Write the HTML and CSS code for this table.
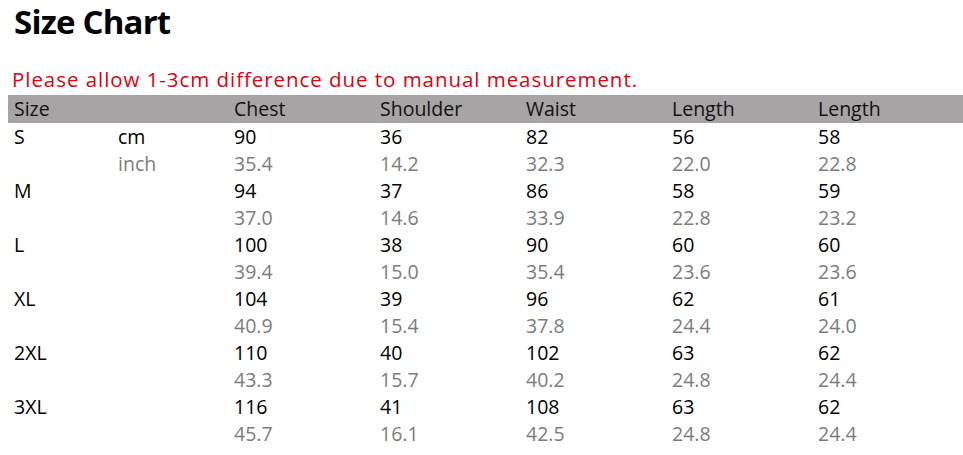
FILE: index.html
```html
<!DOCTYPE html>
<html>
<head>
<meta charset="utf-8">
<link rel="stylesheet" href="styles.css">
</head>
<body>
<div class="page">
  <h1 class="title">Size Chart</h1>
  <p class="note">Please allow 1-3cm difference due to manual measurement.</p>
  <table class="chart">
    <colgroup>
      <col class="c-size"><col class="c-unit"><col class="c-d"><col class="c-d"><col class="c-d"><col class="c-d"><col class="c-last">
    </colgroup>
    <thead>
      <tr><th>Size</th><th></th><th>Chest</th><th>Shoulder</th><th>Waist</th><th>Length</th><th>Length</th></tr>
    </thead>
    <tbody>
      <tr class="cm"><td>S</td><td>cm</td><td>90</td><td>36</td><td>82</td><td>56</td><td>58</td></tr>
      <tr class="in"><td></td><td>inch</td><td>35.4</td><td>14.2</td><td>32.3</td><td>22.0</td><td>22.8</td></tr>
      <tr class="cm"><td>M</td><td></td><td>94</td><td>37</td><td>86</td><td>58</td><td>59</td></tr>
      <tr class="in"><td></td><td></td><td>37.0</td><td>14.6</td><td>33.9</td><td>22.8</td><td>23.2</td></tr>
      <tr class="cm"><td>L</td><td></td><td>100</td><td>38</td><td>90</td><td>60</td><td>60</td></tr>
      <tr class="in"><td></td><td></td><td>39.4</td><td>15.0</td><td>35.4</td><td>23.6</td><td>23.6</td></tr>
      <tr class="cm"><td>XL</td><td></td><td>104</td><td>39</td><td>96</td><td>62</td><td>61</td></tr>
      <tr class="in"><td></td><td></td><td>40.9</td><td>15.4</td><td>37.8</td><td>24.4</td><td>24.0</td></tr>
      <tr class="cm"><td>2XL</td><td></td><td>110</td><td>40</td><td>102</td><td>63</td><td>62</td></tr>
      <tr class="in"><td></td><td></td><td>43.3</td><td>15.7</td><td>40.2</td><td>24.8</td><td>24.4</td></tr>
      <tr class="cm"><td>3XL</td><td></td><td>116</td><td>41</td><td>108</td><td>63</td><td>62</td></tr>
      <tr class="in"><td></td><td></td><td>45.7</td><td>16.1</td><td>42.5</td><td>24.8</td><td>24.4</td></tr>
    </tbody>
  </table>
</div>
</body>
</html>
```
FILE: styles.css
```css
html, body {
  margin: 0;
  padding: 0;
  background: #ffffff;
}
.page {
  padding: 0 0 0 8px;
  font-family: "Open Sans", Lato, sans-serif;
}
.title {
  margin: 0;
  padding: 2px 0 0 6px;
  font-size: 33px;
  font-weight: 700;
  line-height: 40px;
  letter-spacing: -0.8px;
  color: #000;
}
.note {
  margin: 24px 0 3px 4px;
  font-size: 20.5px;
  line-height: 26px;
  letter-spacing: 0.95px;
  color: #e3000f;
}
.chart {
  border-collapse: collapse;
  width: 955px;
  table-layout: fixed;
  font-size: 19.5px;
}
.c-size { width: 104px; }
.c-unit { width: 116px; }
.c-d { width: 146px; }
.chart th {
  background: #a6a4a4;
  font-weight: 400;
  text-align: left;
  color: #111;
  height: 28px;
  padding: 0 0 0 6px;
  line-height: 28px;
}
.chart td {
  height: 27px;
  padding: 0 0 0 6px;
  line-height: 27px;
}
.cm td { color: #000; }
.in td { color: #7c7c7c; }
```
